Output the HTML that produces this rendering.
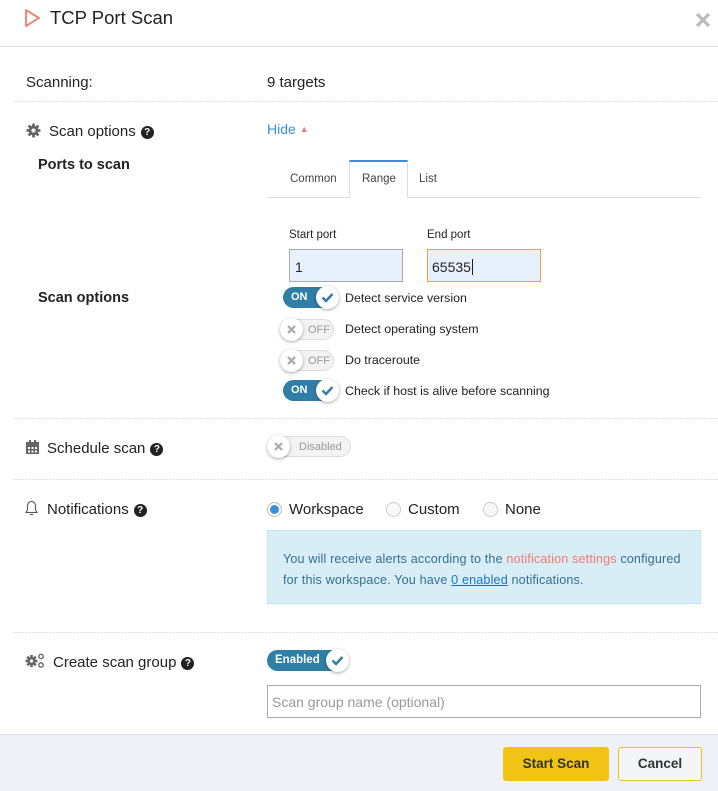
<!DOCTYPE html>
<html><head><meta charset="utf-8"><style>
*{box-sizing:border-box;margin:0;padding:0}
body{width:718px;height:791px;position:relative;background:#fff;font-family:"Liberation Sans",sans-serif;color:#222;overflow:hidden}
.a{position:absolute;white-space:nowrap}
.dot{position:absolute;left:14px;right:0;height:1px;background-image:linear-gradient(to right,#d6d6d6 50%,transparent 50%);background-size:3px 1px}
.lbl{font-size:15px;color:#222}
.q{display:inline-block;width:13px;height:13px;border-radius:50%;background:#222;color:#fff;font-size:10px;font-weight:bold;text-align:center;line-height:13px;vertical-align:1px;margin-left:5px}
.on{position:absolute;height:21px;border-radius:11px;background:#2f7ea6;color:#fff;font-size:11px;font-weight:bold;line-height:21px;padding-left:8px}
.knob{position:absolute;width:23px;height:23px;border-radius:50%;background:#fff;box-shadow:0 1px 3px rgba(0,0,0,.35);top:-1px}
.off{position:absolute;height:21px;border-radius:11px;background:#f3f3f3;border:1px solid #ddd;color:#999;font-size:11px;line-height:19px}
.tl{font-size:12.4px;color:#222}
.radio{position:absolute;width:15px;height:15px;border-radius:50%;border:1px solid #ccc;background:#f8f8f8}
</style></head><body>
<svg class="a" style="left:24px;top:8px" width="18" height="20" viewBox="0 0 18 20"><path d="M2 2 L15 10 L2 18 Z" fill="none" stroke="#f07b6e" stroke-width="1.8" stroke-linejoin="round"/></svg>
<div class="a" style="left:50px;top:7px;font-size:18.5px;color:#222">TCP Port Scan</div>
<svg class="a" style="left:695px;top:12px" width="16" height="16" viewBox="0 0 16 16"><path d="M2 2L14 14M14 2L2 14" stroke="#bbb" stroke-width="3.2"/></svg>
<div class="a" style="left:0;right:0;top:46px;border-top:1px solid #e3e3e3"></div>

<div class="a lbl" style="left:26px;top:74px">Scanning:</div>
<div class="a lbl" style="left:267px;top:74px">9 targets</div>
<div class="dot" style="top:101px"></div>

<svg class="a" style="left:26px;top:123px" width="15" height="15" viewBox="0 0 16 16"><g fill="#666"><circle cx="8" cy="8" r="5.2"/><rect x="6.5" y="0.5" width="3" height="15" rx="1"/><rect x="0.5" y="6.5" width="15" height="3" rx="1"/><rect x="6.5" y="0.5" width="3" height="15" rx="1" transform="rotate(45 8 8)"/><rect x="6.5" y="0.5" width="3" height="15" rx="1" transform="rotate(-45 8 8)"/></g><circle cx="8" cy="8" r="2.2" fill="#fff"/></svg>
<div class="a lbl" style="left:49px;top:123px">Scan options<span class="q">?</span></div>
<div class="a" style="left:267px;top:121px;font-size:14px;color:#3a8fd9">Hide <span style="font-size:9px;color:#f07b6e;vertical-align:2px">▲</span></div>

<div class="a" style="left:38px;top:157px;font-size:14.5px;font-weight:bold">Ports to scan</div>
<div class="a" style="left:267px;top:197px;width:434px;border-top:1px solid #ddd"></div>
<div class="a tl" style="left:290px;top:173px;color:#444;font-size:11.5px">Common</div>
<div class="a" style="left:349px;top:160px;width:59px;height:38px;background:#fff;border:1px solid #ddd;border-top:2px solid #3a8fd9;border-bottom:none"></div>
<div class="a tl" style="left:362px;top:173px;color:#444;font-size:11.5px">Range</div>
<div class="a tl" style="left:419px;top:173px;color:#444;font-size:11.5px">List</div>

<div class="a" style="left:289px;top:229px;font-size:11.5px">Start port</div>
<div class="a" style="left:427px;top:229px;font-size:11.5px">End port</div>
<div class="a" style="left:289px;top:249px;width:114px;height:33px;background:#e8f0fe;border:1px solid #aaa;font-size:14px;padding:9px 0 0 5px">1</div>
<div class="a" style="left:427px;top:249px;width:114px;height:33px;background:#e8f0fe;border:1px solid #f0a04b;font-size:14px;padding:9px 0 0 4px">65535<span style="border-left:1px solid #222;margin-left:1px"></span></div>

<div class="a" style="left:38px;top:290px;font-size:14.5px;font-weight:bold">Scan options</div>

<div class="on" style="left:283px;top:287px;width:50px">ON<div class="knob" style="left:33px"><svg width="23" height="23" viewBox="0 0 23 23"><path d="M6.5 11.5l3.5 3.5 6.5-7" fill="none" stroke="#2f7ea6" stroke-width="2.4"/></svg></div></div>
<div class="a tl" style="left:345px;top:291px">Detect service version</div>

<div class="off" style="left:280px;top:319px;width:54px;padding-left:27px;line-height:20px">OFF<div class="knob" style="left:-1px;top:-2px"><svg width="23" height="23" viewBox="0 0 23 23"><path d="M8 8l7 7M15 8l-7 7" stroke="#aaa" stroke-width="2.2"/></svg></div></div>
<div class="a tl" style="left:345px;top:322px">Detect operating system</div>

<div class="off" style="left:280px;top:350px;width:54px;padding-left:27px;line-height:20px">OFF<div class="knob" style="left:-1px;top:-2px"><svg width="23" height="23" viewBox="0 0 23 23"><path d="M8 8l7 7M15 8l-7 7" stroke="#aaa" stroke-width="2.2"/></svg></div></div>
<div class="a tl" style="left:345px;top:353px">Do traceroute</div>

<div class="on" style="left:283px;top:380px;width:50px">ON<div class="knob" style="left:33px"><svg width="23" height="23" viewBox="0 0 23 23"><path d="M6.5 11.5l3.5 3.5 6.5-7" fill="none" stroke="#2f7ea6" stroke-width="2.4"/></svg></div></div>
<div class="a tl" style="left:345px;top:384px">Check if host is alive before scanning</div>

<div class="dot" style="top:418px"></div>

<svg class="a" style="left:26px;top:440px" width="13" height="14" viewBox="0 0 13 14"><rect x="0" y="2" width="13" height="12" fill="#666"/><rect x="3" y="0" width="2" height="3" fill="#666"/><rect x="8" y="0" width="2" height="3" fill="#666"/><g fill="#fff"><rect x="2" y="7" width="2" height="2"/><rect x="5.5" y="7" width="2" height="2"/><rect x="9" y="7" width="2" height="2"/><rect x="2" y="10.5" width="2" height="2"/><rect x="5.5" y="10.5" width="2" height="2"/><rect x="9" y="10.5" width="2" height="2"/></g></svg>
<div class="a lbl" style="left:47px;top:440px">Schedule scan<span class="q">?</span></div>
<div class="off" style="left:267px;top:436px;width:84px;padding-left:31px;font-size:11px;line-height:20px">Disabled<div class="knob" style="left:-1px;top:-2px"><svg width="23" height="23" viewBox="0 0 23 23"><path d="M8 8l7 7M15 8l-7 7" stroke="#aaa" stroke-width="2.2"/></svg></div></div>

<div class="dot" style="top:479px"></div>

<svg class="a" style="left:25px;top:500px" width="13" height="17" viewBox="0 0 13 17"><path d="M6.5 1.5c-2.5 0-4 2-4 4.5v4L1 12.5h11L10.5 10V6c0-2.5-1.5-4.5-4-4.5z" fill="none" stroke="#555" stroke-width="1.1"/><path d="M5 14.5h3" stroke="#555" stroke-width="1.2"/></svg>
<div class="a lbl" style="left:47px;top:501px">Notifications<span class="q">?</span></div>

<div class="radio" style="left:267px;top:502px;border-color:#bbb;background:#fff"><div style="position:absolute;left:2px;top:2px;width:9px;height:9px;border-radius:50%;background:#3a8fd9"></div></div>
<div class="a lbl" style="left:289px;top:501px">Workspace</div>
<div class="radio" style="left:386px;top:502px"></div>
<div class="a lbl" style="left:408px;top:501px">Custom</div>
<div class="radio" style="left:483px;top:502px"></div>
<div class="a lbl" style="left:505px;top:501px">None</div>

<div class="a" style="left:267px;top:530px;width:434px;height:74px;background:#d9edf7;border:1px solid #bce8f1"></div>
<div class="a" style="left:283px;top:549px;font-size:12.6px;letter-spacing:0.15px;color:#31708f;line-height:21px">You will receive alerts according to the <span style="color:#f07b6e">notification settings</span> configured<br>for this workspace. You have <span style="color:#1a73c8;text-decoration:underline">0 enabled</span> notifications.</div>

<div class="dot" style="top:632px"></div>

<svg class="a" style="left:25px;top:653px" width="20" height="16" viewBox="0 0 20 16"><g fill="#666"><circle cx="6.5" cy="8" r="4"/><rect x="5.2" y="2" width="2.6" height="12"/><rect x="0.5" y="6.7" width="12" height="2.6"/><rect x="5.2" y="2" width="2.6" height="12" transform="rotate(45 6.5 8)"/><rect x="5.2" y="2" width="2.6" height="12" transform="rotate(-45 6.5 8)"/></g><circle cx="6.5" cy="8" r="1.6" fill="#fff"/><circle cx="16" cy="3.5" r="2.2" fill="none" stroke="#666" stroke-width="1.4"/><circle cx="16" cy="12" r="2.2" fill="none" stroke="#666" stroke-width="1.4"/></svg>
<div class="a lbl" style="left:53px;top:654px">Create scan group<span class="q">?</span></div>

<div class="on" style="left:267px;top:650px;width:78px;padding-left:8px;font-size:11.5px">Enabled<div class="knob" style="left:59px"><svg width="23" height="23" viewBox="0 0 23 23"><path d="M6.5 11.5l3.5 3.5 6.5-7" fill="none" stroke="#2f7ea6" stroke-width="2.4"/></svg></div></div>

<div class="a" style="left:267px;top:685px;width:434px;height:33px;border:1px solid #aaa;font-size:14px;color:#999;padding:8px 0 0 4px">Scan group name (optional)</div>

<div class="a" style="left:0;top:734px;width:718px;height:57px;background:#eef1f6;border-top:1px solid #dde2e8"></div>
<div class="a" style="left:503px;top:747px;width:106px;height:34px;background:#f2c314;border-radius:3px;font-size:13.5px;font-weight:bold;color:#333;text-align:center;line-height:34px">Start Scan</div>
<div class="a" style="left:618px;top:747px;width:84px;height:34px;background:#f4f5f8;border:1px solid #f2c314;border-radius:3px;font-size:13.5px;font-weight:bold;color:#333;text-align:center;line-height:32px">Cancel</div>
</body></html>
